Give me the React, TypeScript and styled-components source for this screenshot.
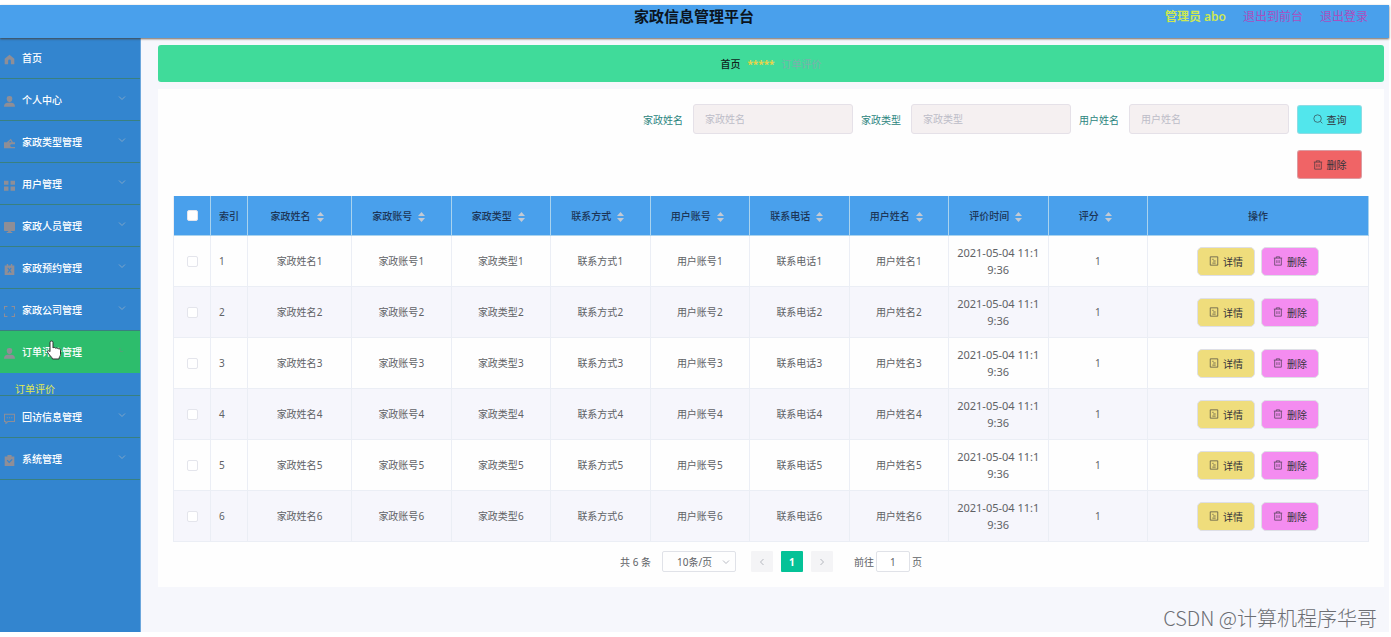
import React from "react";
import styled, { createGlobalStyle, css } from "styled-components";

const GlobalStyle = createGlobalStyle`
  *, *::before, *::after { box-sizing: border-box; }
  body { margin: 0; background: #fff; }
  body, button, input, select {
    font-family: "Noto Sans", "Noto Sans CJK SC", sans-serif;
    font-size: 10px;
  }
`;

const Page = styled.div`
  position: relative;
  display: flex;
  flex-direction: column;
  min-height: 100vh;
  padding: 5px 2px 5px 0;
  color: #606266;
`;

const Header = styled.header`
  position: relative;
  z-index: 1;
  display: grid;
  grid-template-columns: 1fr auto 1fr;
  height: 33px;
  margin-bottom: -1px;
  padding: 0 21px 0 0;
  background: #49a0ec;
  box-shadow: 0 1px 2px rgba(70, 50, 30, 0.75);
`;

const Title = styled.h1`
  grid-column: 2;
  margin: 0;
  padding-left: 20px;
  font-size: 15px;
  line-height: 23px;
  font-weight: 700;
  color: #0b1420;
`;

const Account = styled.div`
  display: flex;
  justify-content: flex-end;
  gap: 17px;
  font-size: 12px;
  line-height: 23px;
`;

const UserName = styled.span`
  font-weight: 600;
  color: #cfe850;
`;

const ExitLink = styled.a`
  color: #a84fc0;
  text-decoration: none;
`;

const Body = styled.div`
  display: flex;
  flex: 1;
`;

const Sidebar = styled.nav`
  flex: none;
  width: 141px;
  background: #3385cf;
  border-right: 1px solid #6ba6dc;
`;

const menuBase = css`
  border-bottom: 1px solid #39807f;
`;

const MenuItem = styled.a<{ $active?: boolean }>`
  ${menuBase}
  position: relative;
  display: flex;
  align-items: center;
  height: 42px;
  padding: 0 14px 0 4px;
  gap: 7px;
  color: #fff;
  font-weight: 500;
  text-decoration: none;
  background: ${(p) => (p.$active ? "#2dbd6c" : "transparent")};
  border-bottom-color: ${(p) => (p.$active ? "#2dbd6c" : "#39807f")};
`;

const MenuText = styled.span`
  flex: 1;
`;

const MenuIcon = styled.svg`
  flex: none;
  width: 11px;
  height: 11px;
  margin-top: 3px;
  fill: #8f8e96;
  stroke: none;
`;

const Chevron = styled.svg<{ $dim?: boolean }>`
  width: 8px;
  height: 8px;
  margin-bottom: 3px;
  fill: none;
  stroke: ${(p) => (p.$dim ? "#4fa377" : "#80a6c8")};
`;

const SubItem = styled.a`
  ${menuBase}
  display: block;
  padding: 11px 0 0 15px;
  line-height: 11px;
  color: #e2ea4e;
  text-decoration: none;
`;

const HandCursor = styled.svg`
  position: absolute;
  left: 46px;
  top: 9px;
  width: 17px;
  height: 21px;
`;

const Main = styled.main`
  flex: 1;
  min-width: 0;
  padding: 8px 5px 45px 17px;
  background: #f6f7fc;
`;

const Breadcrumb = styled.div`
  display: flex;
  align-items: center;
  justify-content: center;
  gap: 7px;
  height: 37px;
  margin-bottom: 7px;
  border-radius: 3px;
  background: #40db9a;
`;

const HomeCrumb = styled.a`
  color: #10241c;
  font-weight: 500;
  text-decoration: none;
`;

const Stars = styled.span`
  color: #e9d348;
  font-weight: 700;
`;

const Crumb = styled.span`
  color: #7cb0ac;
`;

const Panel = styled.section`
  padding: 15px;
  background: #fefefe;
`;

const SearchForm = styled.form`
  display: flex;
  flex-wrap: wrap;
  align-items: center;
  justify-content: flex-end;
  gap: 8px;
  padding-right: 7px;
`;

const FieldLabel = styled.label`
  width: 42px;
  color: #2c8580;
  white-space: nowrap;
`;

const Field = styled.input`
  width: 160px;
  height: 30px;
  padding: 0 11px;
  border: 1px solid #e5e1e8;
  border-radius: 3px;
  background: #f5f0f1;
  color: #606266;
  outline: none;
  &::placeholder { color: #bdbdc8; }
`;

const Toolbar = styled.div`
  display: flex;
  justify-content: flex-end;
  padding: 16px 7px 17px;
`;

const Button = styled.button<{ $bg: string; $small?: boolean }>`
  display: inline-flex;
  align-items: center;
  justify-content: center;
  gap: 4px;
  width: ${(p) => (p.$small ? 58 : 65)}px;
  height: 29px;
  padding: 0;
  border: 1px solid ${(p) => (p.$small ? "#dedfe6" : "rgba(200, 210, 220, 0.5)")};
  border-radius: ${(p) => (p.$small ? 5 : 3)}px;
  background: ${(p) => p.$bg};
  color: #33333a;
  cursor: pointer;
`;

const ButtonIcon = styled.svg`
  width: 10px;
  height: 10px;
  fill: none;
  stroke: currentColor;
  opacity: 0.75;
`;

const Table = styled.table`
  width: 100%;
  table-layout: fixed;
  border-collapse: separate;
  border-spacing: 0;
  border-left: 1px solid #ebeef5;
`;

const Col = styled.col<{ $w?: number }>`
  width: ${(p) => (p.$w ? `${p.$w}px` : "auto")};
`;

const HeadCell = styled.th<{ $left?: boolean }>`
  height: 40px;
  padding: 0 8px;
  border-right: 1px solid #a9d3ee;
  border-bottom: 1px solid #a9d3ee;
  background: #49a0ec;
  color: #1c3557;
  font-weight: 500;
  text-align: ${(p) => (p.$left ? "left" : "center")};
  white-space: nowrap;
`;

const Row = styled.tr`
  &:nth-child(even) { background: #f6f6fc; }
`;

const Cell = styled.td<{ $left?: boolean }>`
  height: 51px;
  padding: 0 8px;
  border-right: 1px solid #ebeef5;
  border-bottom: 1px solid #ebeef5;
  text-align: ${(p) => (p.$left ? "left" : "center")};
  line-height: 17px;
  word-break: break-all;
`;

const DateCell = styled(Cell)`
  font-size: 11px;
`;

const Check = styled.input`
  appearance: none;
  display: block;
  width: 11px;
  height: 11px;
  margin: 0 auto;
  border: 1px solid #e4e5ec;
  border-radius: 2px;
  background: #fff;
`;

const SortIcon = styled.svg`
  width: 7px;
  height: 10px;
  margin: 0 5px 0 6px;
  vertical-align: middle;
  fill: #c3cad4;
`;

const Actions = styled.div`
  display: flex;
  justify-content: center;
  gap: 6px;
`;

const Pagination = styled.div`
  display: flex;
  align-items: center;
  justify-content: center;
  height: 21px;
  margin-top: 9px;
`;

const SelectWrap = styled.label`
  display: flex;
  align-items: center;
  width: 74px;
  height: 21px;
  margin: 0 15px 0 11px;
  padding-right: 5px;
  border: 1px solid #e0e2e8;
  border-radius: 2px;
  color: #b9bcc4;
`;

const SizeSelect = styled.select`
  appearance: none;
  flex: 1;
  min-width: 0;
  padding: 0 0 0 14px;
  border: 0;
  background: transparent;
  color: #606266;
  outline: none;
`;

const PageButton = styled.button<{ $current?: boolean }>`
  display: flex;
  align-items: center;
  justify-content: center;
  width: 22px;
  height: 21px;
  padding: 0;
  border: 0;
  border-radius: 1px;
  background: ${(p) => (p.$current ? "#04c297" : "#f4f4f6")};
  color: ${(p) => (p.$current ? "#fff" : "#b4b7be")};
  font-weight: 700;
`;

const Pager = styled.div`
  display: flex;
  gap: 8px;
  margin-right: 21px;
`;

const Jump = styled.label`
  display: flex;
  align-items: center;
  gap: 2px;
`;

const JumpInput = styled.input`
  width: 34px;
  height: 21px;
  padding: 0;
  border: 1px solid #e0e2e8;
  border-radius: 2px;
  color: #606266;
  text-align: center;
`;

const Watermark = styled.div`
  position: absolute;
  right: 14px;
  bottom: 5px;
  font-family: "Noto Sans CJK SC", sans-serif;
  font-size: 20px;
  font-weight: 300;
  line-height: 28px;
  color: #6c6e73;
`;

const menuIcons: Record<string, React.ReactNode> = {
  home: <path d="M8 1 1 7v8h5v-5a2 2 0 0 1 4 0v5h5V7z" />,
  user: <path d="M8 0a4 4 0 0 1 4 4.500c0 2.500-1.800 4.500-4 4.500S4 7 4 4.500A4 4 0 0 1 8 0zM0 15.500c0-3 1.500-5.300 4.500-5.700h7c3 .4 4.500 2.700 4.500 5.700z" />,
  wallet: <path fillRule="evenodd" d="M0 6h4l6-5 3 5h3v3h-5a2 2 0 0 0 0 4h5v2H0zM7 6h4l-1.500-2.500z" />,
  grid: <path d="M0 1h6.500v6H0zM9.500 1H16v6H9.500zM0 9.500h6.500v6H0zM9.500 9.500H16v6H9.500z" />,
  platform: <path d="M1 0h14a1 1 0 0 1 1 1v11a1 1 0 0 1-1 1h-5v1.500h2V16H4v-1.500h2V13H1a1 1 0 0 1-1-1V1a1 1 0 0 1 1-1z" />,
  order: <path fillRule="evenodd" d="M1 2h3V0h2v2h4V0h2v2h3v14H1zM5 6l2 3-2 3 1 1 2-2.500L10 13l1-1-2-3 2-3-1-1-2 2.500L6 5z" />,
  full: <path d="M0 0h5v1.500H1.500V5H0zM11 0h5v5h-1.500V1.500H11zM0 11h1.500v3.500H5V16H0zM14.500 11H16v5h-5v-1.500h3.500z" />,
  chat: <path fillRule="evenodd" d="M0 1h16v12H6l-3 3H2v-3H0zM1.400 2.400v9.200h2v1.800l2-1.800h9.200V2.400zM4 6.200h1.600v1.600H4zM7.200 6.200h1.600v1.600H7.200zM10.400 6.200H12v1.600h-1.600z" />,
  claim: <path fillRule="evenodd" d="M1 2h4V0h6v2h4v14H1zM4 8l3.500 4L12.500 7l-1.200-1.200L7.500 9.600 5.200 7z" />,
};

const menu = [
  { label: "首页", icon: "home" },
  { label: "个人中心", icon: "user" },
  { label: "家政类型管理", icon: "wallet" },
  { label: "用户管理", icon: "grid" },
  { label: "家政人员管理", icon: "platform" },
  { label: "家政预约管理", icon: "order" },
  { label: "家政公司管理", icon: "full" },
  { label: "订单评价管理", icon: "user", active: true },
  { label: "回访信息管理", icon: "chat" },
  { label: "系统管理", icon: "claim" },
];

const columns = ["家政姓名", "家政账号", "家政类型", "联系方式", "用户账号", "联系电话", "用户姓名"];
const filters = ["家政姓名", "家政类型", "用户姓名"];
const rows = [1, 2, 3, 4, 5, 6];

const TrashIcon = () => (
  <ButtonIcon viewBox="0 0 12 12" aria-hidden="true">
    <path d="M1 2.500h10M4 2.500V1h4v1.500M2 2.500V11h8V2.500M4.700 5v3.500M7.300 5v3.500" />
  </ButtonIcon>
);

const DetailIcon = () => (
  <ButtonIcon viewBox="0 0 12 12" aria-hidden="true">
    <path d="M1.500 1h9v10h-9zM4 4h1.500M5 6h3M4 8.500h4" />
  </ButtonIcon>
);

const SearchIcon = () => (
  <ButtonIcon viewBox="0 0 12 12" aria-hidden="true">
    <circle cx="5.500" cy="5.500" r="4.500" />
    <path d="m9 9 2.200 2.200" />
  </ButtonIcon>
);

const Sort = () => (
  <SortIcon viewBox="0 0 7 10" aria-hidden="true">
    <path d="M3.500 0 7 4H0zM3.500 10 0 6h7z" />
  </SortIcon>
);

const Down = ({ dim }: { dim?: boolean }) => (
  <Chevron $dim={dim} viewBox="0 0 8 8" aria-hidden="true">
    <path d={dim ? "M2 2v3.500h3" : "m1 2.500 3 3 3-3"} />
  </Chevron>
);

const Arrow = ({ d }: { d: string }) => (
  <svg width="8" height="8" viewBox="0 0 8 8" fill="none" stroke="currentColor" aria-hidden="true">
    <path d={d} />
  </svg>
);

export default function App() {
  return (
    <Page>
      <GlobalStyle />
      <Header>
        <Title>家政信息管理平台</Title>
        <Account>
          <UserName>管理员 abo</UserName>
          <ExitLink href="#front">退出到前台</ExitLink>
          <ExitLink href="#logout">退出登录</ExitLink>
        </Account>
      </Header>
      <Body>
        <Sidebar>
          {menu.map((item) => (
            <React.Fragment key={item.label}>
              <MenuItem href="#menu" $active={item.active}>
                <MenuIcon viewBox="0 0 16 16" aria-hidden="true">{menuIcons[item.icon]}</MenuIcon>
                <MenuText>{item.label}</MenuText>
                {item.icon !== "home" && <Down dim={item.active} />}
                {item.active && (
                  <HandCursor viewBox="0 0 17 21" aria-hidden="true">
                    <path
                      d="M4 2.500a1.500 1.500 0 0 1 3 0V8c.5-.8 2.300-.7 2.600.3.700-.7 2.200-.4 2.500.6.900-.6 2.400 0 2.400 1.300v4.300c0 1.600-1.500 2.500-1.500 4.500H6.500c0-1.500-4-4.500-5-7-.3-1.500 1.300-1.700 2.500-.3z"
                      fill="#fff"
                      stroke="#333"
                    />
                  </HandCursor>
                )}
              </MenuItem>
              {item.active && <SubItem href="#review">订单评价</SubItem>}
            </React.Fragment>
          ))}
        </Sidebar>
        <Main>
          <Breadcrumb>
            <HomeCrumb href="#home">首页</HomeCrumb>
            <Stars>*****</Stars>
            <Crumb>订单评价</Crumb>
          </Breadcrumb>
          <Panel>
            <SearchForm onSubmit={(e) => e.preventDefault()}>
              {filters.map((name, i) => (
                <React.Fragment key={name}>
                  <FieldLabel htmlFor={`filter-${i}`}>{name}</FieldLabel>
                  <Field id={`filter-${i}`} type="text" placeholder={name} />
                </React.Fragment>
              ))}
              <Button type="submit" $bg="#52e6ec"><SearchIcon />查询</Button>
            </SearchForm>
            <Toolbar>
              <Button type="button" $bg="#f06466"><TrashIcon />删除</Button>
            </Toolbar>
            <Table>
              <colgroup>
                <Col $w={37} />
                <Col $w={37} />
                <Col $w={104} />
                {[...columns.slice(1), "time", "score"].map((c) => <Col key={c} />)}
                <Col $w={221} />
              </colgroup>
              <thead>
                <tr>
                  <HeadCell><Check type="checkbox" aria-label="全选" /></HeadCell>
                  <HeadCell $left>索引</HeadCell>
                  {[...columns, "评价时间", "评分"].map((c) => (
                    <HeadCell key={c}>{c}<Sort /></HeadCell>
                  ))}
                  <HeadCell>操作</HeadCell>
                </tr>
              </thead>
              <tbody>
                {rows.map((n) => (
                  <Row key={n}>
                    <Cell><Check type="checkbox" aria-label={`选择 ${n}`} /></Cell>
                    <Cell $left>{n}</Cell>
                    {columns.map((c) => <Cell key={c}>{c}{n}</Cell>)}
                    <DateCell>2021-05-04 11:19:36</DateCell>
                    <Cell>1</Cell>
                    <Cell>
                      <Actions>
                        <Button type="button" $small $bg="#efdd7c"><DetailIcon />详情</Button>
                        <Button type="button" $small $bg="#f48cf0"><TrashIcon />删除</Button>
                      </Actions>
                    </Cell>
                  </Row>
                ))}
              </tbody>
            </Table>
            <Pagination>
              <span>共 6 条</span>
              <SelectWrap>
                <SizeSelect aria-label="每页条数" defaultValue="10">
                  <option value="10">10条/页</option>
                </SizeSelect>
                <Arrow d="m1 2.500 3 3 3-3" />
              </SelectWrap>
              <Pager>
                <PageButton type="button" aria-label="上一页"><Arrow d="m5.500 1-3 3 3 3" /></PageButton>
                <PageButton type="button" $current>1</PageButton>
                <PageButton type="button" aria-label="下一页"><Arrow d="m2.500 1 3 3-3 3" /></PageButton>
              </Pager>
              <Jump>
                前往
                <JumpInput type="text" defaultValue="1" />
                页
              </Jump>
            </Pagination>
          </Panel>
        </Main>
      </Body>
      <Watermark>CSDN @计算机程序华哥</Watermark>
    </Page>
  );
}
